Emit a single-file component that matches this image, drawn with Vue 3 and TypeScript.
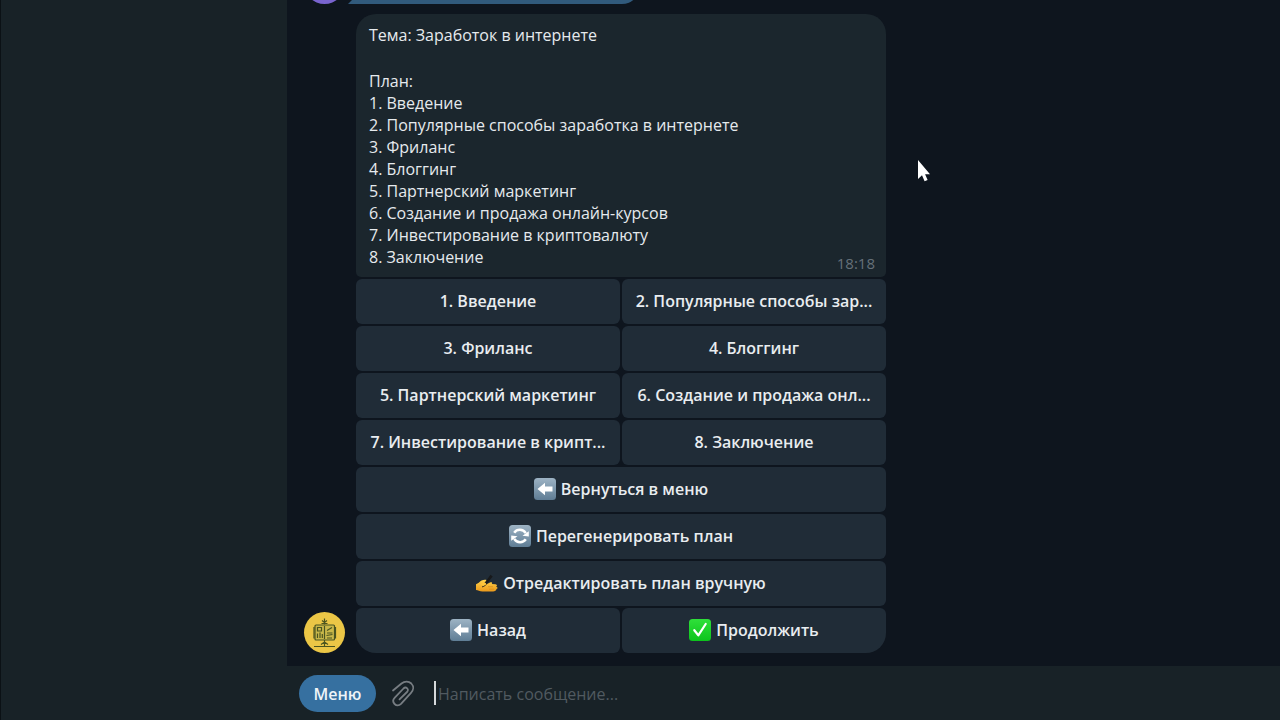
<script setup lang="ts">
import { ref } from 'vue'

type IconName = 'back' | 'refresh' | 'write' | 'check'
interface KeyButton {
  text: string
  icon?: IconName
}

const plan: string[] = [
  'Введение',
  'Популярные способы заработка в интернете',
  'Фриланс',
  'Блоггинг',
  'Партнерский маркетинг',
  'Создание и продажа онлайн-курсов',
  'Инвестирование в криптовалюту',
  'Заключение',
]

const keyboard: KeyButton[][] = [
  [{ text: '1. Введение' }, { text: '2. Популярные способы зар...' }],
  [{ text: '3. Фриланс' }, { text: '4. Блоггинг' }],
  [{ text: '5. Партнерский маркетинг' }, { text: '6. Создание и продажа онл...' }],
  [{ text: '7. Инвестирование в крипт...' }, { text: '8. Заключение' }],
  [{ text: 'Вернуться в меню', icon: 'back' }],
  [{ text: 'Перегенерировать план', icon: 'refresh' }],
  [{ text: 'Отредактировать план вручную', icon: 'write' }],
  [{ text: 'Назад', icon: 'back' }, { text: 'Продолжить', icon: 'check' }],
]

const draft = ref('')
</script>

<template>
  <div class="app">
    <svg class="defs" width="0" height="0" aria-hidden="true">
      <defs>
        <linearGradient id="tile-blue" x1="0" y1="0" x2="0" y2="1">
          <stop offset="0" stop-color="#9db3c4" />
          <stop offset="1" stop-color="#5f7d95" />
        </linearGradient>
        <linearGradient id="tile-green" x1="0" y1="0" x2="0" y2="1">
          <stop offset="0" stop-color="#2fe03a" />
          <stop offset="1" stop-color="#0cc41c" />
        </linearGradient>
        <linearGradient id="hand" x1="0" y1="0" x2="0" y2="1">
          <stop offset="0" stop-color="#ffd34a" />
          <stop offset="1" stop-color="#eb9a1c" />
        </linearGradient>
      </defs>
    </svg>

    <aside class="sidebar"></aside>

    <main class="main">
      <section class="feed">
        <div class="row previous">
          <div class="avatar avatar-user"></div>
          <div class="old-bubble"></div>
        </div>

        <div class="row">
          <div class="avatar avatar-bot">
            <svg viewBox="0 0 41 41" width="41" height="41" fill="none" stroke="#4a5420" stroke-width="1.2" aria-hidden="true">
              <path d="M20.500 6.500v6M18 8.500l2.500 2 2.500-2M17.500 11.500h6" />
              <rect x="11" y="13" width="19.500" height="15" rx="1" fill="#c9b84a" />
              <path d="M10 15v11.500M31.500 15v11.500" />
              <path d="M13.500 15.500h4v3.500h-4zM13.500 21.500v4.500M16 20.500v5.500M18.300 22v4M20.500 14v13M23 18.500l5-3M23 21h5.500M22.500 23.500l6-1M23 26h5" />
              <path d="M20.500 28v6M17 32.500l3.500-2.500 3.500 2.500M10 34.500h21" />
            </svg>
          </div>

          <article class="message">
            <div class="bubble">
              <p>Тема: Заработок в интернете</p>
              <div class="plan">
                <p>План:</p>
                <p v-for="(item, i) in plan" :key="item">{{ i + 1 }}. {{ item }}</p>
              </div>
              <time class="time">18:18</time>
            </div>

            <div class="keyboard">
              <div v-for="(line, r) in keyboard" :key="r" class="key-row">
                <button v-for="key in line" :key="key.text" type="button" class="key">
                  <svg v-if="key.icon" class="emoji" viewBox="0 0 22 22" width="22" height="22" aria-hidden="true">
                    <template v-if="key.icon === 'back'">
                      <rect x="0" y="0" width="22" height="22" rx="3.500" fill="url(#tile-blue)" />
                      <path d="M3.500 11 11 4.800v3.700h7.500v5H11v3.700z" fill="#fff" />
                    </template>
                    <template v-else-if="key.icon === 'refresh'">
                      <rect x="0" y="0" width="22" height="22" rx="3.500" fill="url(#tile-blue)" />
                      <path d="M5.200 7.800C8 3.800 14 3.800 16.800 8.200M16.800 14.200C14 18.200 8 18.200 5.200 13.800" fill="none" stroke="#fff" stroke-width="2.500" />
                      <path d="M19.800 6.300v5.200l-6.300-.8zM2.200 15.700v-5.200l6.300.8z" fill="#fff" />
                    </template>
                    <template v-else-if="key.icon === 'write'">
                      <path d="M0 18v-5.800c2-.2 3.500-2.400 5.500-3.600 1.500-.9 4-1.300 5-.5.800.8-.5 2.100-1.500 2.900l1 1.500 4-2c1.700-.8 2.900.3 1.700 1.500l3.800.3c1.700.2 1.900 1.900.5 2.400 1.800.3 2.200 1.900.5 2.400-.2 1.600-1.500 2.300-3.500 2.300H6.500C3.500 19.400 2 18 0 18z" fill="url(#hand)" />
                      <path d="M12 14.700h5M13 17.200h5" stroke="#cf861d" stroke-width=".6" />
                      <path d="M6.800 13.200 14.500 2.800l2.200 1.600-7.600 9.600-3.100 1.600z" fill="#17191b" />
                      <path d="M5 12.500c1.500-1.600 3.400-2.200 4.700-1.500.9.700.3 2-.7 2.300l-2 1" fill="#ffc63b" />
                    </template>
                    <template v-else>
                      <rect x="0" y="0" width="22" height="22" rx="3.500" fill="url(#tile-green)" />
                      <path d="M5.300 11.200 9.300 16.300 16.700 5" fill="none" stroke="#fff" stroke-width="2.200" stroke-linecap="round" stroke-linejoin="round" />
                    </template>
                  </svg>
                  <span>{{ key.text }}</span>
                </button>
              </div>
            </div>
          </article>
        </div>
      </section>

      <footer class="composer">
        <button type="button" class="menu">Меню</button>
        <button type="button" class="attach" aria-label="Прикрепить файл">
          <svg viewBox="0 0 26 28" width="26" height="28" fill="none" stroke="#777d82" stroke-width="1.800" stroke-linecap="round" stroke-linejoin="round" aria-hidden="true">
            <path d="M3 11.500 11.500 4.500c3-2.400 7.200-2.500 9.800 0 2.700 2.800 2.300 6.700-.3 9.300L11 24.800c-2 2-4.700 1.900-6.400.2-1.800-1.800-1.700-4.300.2-6.300L13.500 9.500c1.200-1.200 2.700-1.100 3.700-.2 1 1 1 2.500-.2 3.700L9.500 20.300" />
          </svg>
        </button>
        <span class="caret"></span>
        <input v-model="draft" class="field" type="text" placeholder="Написать сообщение..." aria-label="Сообщение" />
      </footer>
    </main>

    <svg class="cursor" viewBox="0 0 14 23" width="14" height="23" aria-hidden="true">
      <path d="M2 1v19l4-3.700 2.600 6 3-1.400-2.500-5.600H14z" fill="#fff" />
    </svg>
  </div>
</template>

<style>
body {
  margin: 0;
  background: #0e151e;
}
</style>

<style scoped>
.app {
  display: flex;
  height: 100vh;
  overflow: hidden;
  position: relative;
  box-sizing: border-box;
  border-left: 1px solid #0b1115;
  background: #0e151e;
  color: #e6eaed;
  font-family: "Open Sans", "Noto Sans", sans-serif;
  font-size: 16px;
}
.defs {
  position: absolute;
}
.sidebar {
  flex: 0 0 286px;
  background: #182227;
}
.main {
  flex: 1;
  min-width: 0;
  display: flex;
  flex-direction: column;
}
.feed {
  flex: 1;
  min-height: 0;
  overflow: hidden;
  display: flex;
  flex-direction: column;
  justify-content: flex-end;
  gap: 10px;
  padding: 0 16px 13px 17px;
}
.row {
  display: flex;
  flex-shrink: 0;
  align-items: flex-end;
  gap: 11px;
}
.avatar {
  flex: 0 0 41px;
  height: 41px;
  border-radius: 50%;
}
.avatar-user {
  background: #7964cf;
}
.avatar-bot {
  background: #ebc646;
}
.avatar svg {
  display: block;
}
.old-bubble {
  position: relative;
  width: 284px;
  height: 44px;
  border-radius: 18px 18px 18px 0;
  background: #315a7c;
}
.old-bubble::before {
  content: "";
  position: absolute;
  left: -8px;
  bottom: 0;
  border-right: 8px solid #315a7c;
  border-top: 8px solid transparent;
}
.message {
  flex: 0 1 530px;
  min-width: 0;
}
.bubble {
  position: relative;
  padding: 10px 13px 9px;
  border-radius: 20px 20px 5px 5px;
  background: #1b262d;
  line-height: 22px;
}
.bubble p {
  margin: 0;
}
.plan {
  margin-top: 24px;
}
.time {
  position: absolute;
  right: 11px;
  bottom: 3px;
  color: #66717a;
  font-size: 15px;
}
.keyboard,
.key-row {
  display: flex;
  gap: 2px;
}
.keyboard {
  flex-direction: column;
  margin-top: 2px;
}
.key {
  flex: 1 1 0;
  min-width: 0;
  height: 45px;
  padding: 0 8px 2px;
  display: flex;
  align-items: center;
  justify-content: center;
  gap: 5px;
  border: 0;
  border-radius: 6px;
  background: #202c37;
  color: #e9edf0;
  font: inherit;
  font-weight: 600;
  white-space: nowrap;
}
.key-row:last-child .key:first-child {
  border-bottom-left-radius: 20px;
}
.key-row:last-child .key:last-child {
  border-bottom-right-radius: 20px;
}
.emoji {
  flex: none;
}
.composer {
  flex: none;
  height: 54px;
  display: flex;
  align-items: center;
  padding: 0 12px;
  background: #182227;
}
.menu {
  width: 77px;
  height: 37px;
  padding: 1px 0 0;
  border: 0;
  border-radius: 19px;
  background: #3670a0;
  color: #eef4f8;
  font: inherit;
  font-weight: 600;
}
.attach {
  margin: 0 18px 0 14px;
  padding: 0;
  border: 0;
  background: none;
  display: flex;
}
.caret {
  width: 2px;
  height: 24px;
  background: #d5d9db;
}
.field {
  flex: 1;
  min-width: 0;
  padding: 2px 0 0 2px;
  border: 0;
  outline: 0;
  background: none;
  color: #e6eaed;
  font: inherit;
}
.field::placeholder {
  color: #515a60;
  opacity: 1;
}
.cursor {
  position: absolute;
  left: 915px;
  top: 159px;
}
</style>
